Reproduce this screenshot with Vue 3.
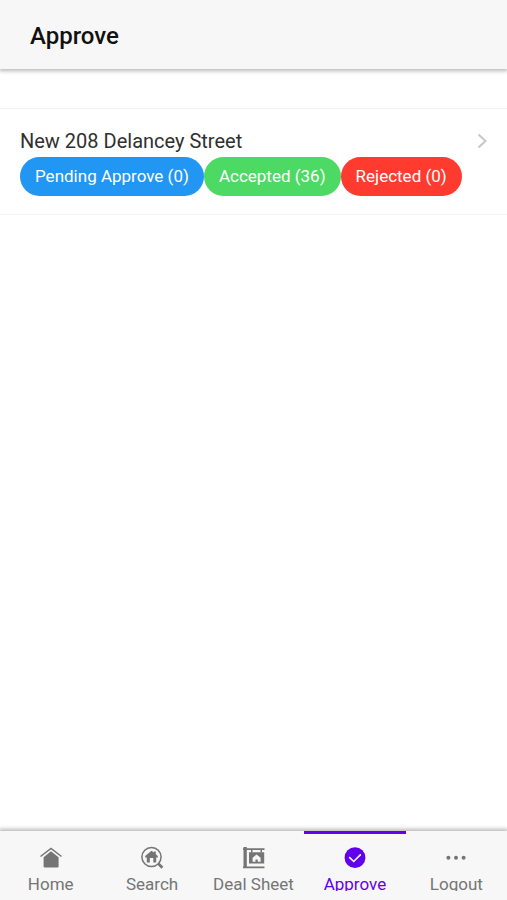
<template>
  <div class="page">
    <header class="navbar">
      <h1 class="navbar__title">Approve</h1>
    </header>

    <main class="content">
      <ul class="list">
        <li v-for="item in items" :key="item.id" class="list__item">
          <a href="#" class="list__link" @click.prevent>
            <span class="list__row">
              <span class="list__title">{{ item.title }}</span>
              <svg class="list__arrow" viewBox="0 0 10 16" aria-hidden="true">
                <path d="M1.5 1.5 L8.5 8 L1.5 14.5" />
              </svg>
            </span>
            <span class="chips">
              <span class="chip chip--pending">Pending Approve ({{ item.pending }})</span>
              <span class="chip chip--accepted">Accepted ({{ item.accepted }})</span>
              <span class="chip chip--rejected">Rejected ({{ item.rejected }})</span>
            </span>
          </a>
        </li>
      </ul>
    </main>

    <nav class="tabbar">
      <a
        v-for="tab in tabs"
        :key="tab.name"
        href="#"
        class="tab"
        :class="{ 'tab--active': tab.name === activeTab }"
        @click.prevent="activeTab = tab.name"
      >
        <svg v-if="tab.icon === 'home'" class="tab__icon" viewBox="0 0 24 24" aria-hidden="true">
          <path class="line" d="M1.5 10.5 L12 2.4 L22.5 10.5" />
          <path d="M12 5.2 L19.6 11.2 V20.2 Q19.6 21.5 18.3 21.5 H5.9 Q4.6 21.5 4.6 20.2 V11.2 Z" />
        </svg>
        <svg v-else-if="tab.icon === 'search'" class="tab__icon" viewBox="0 0 24 24" aria-hidden="true">
          <circle class="line" cx="11.5" cy="11" r="9.6" />
          <path class="handle" d="M18.4 17.8 L22.4 21.8" />
          <path d="M11.5 4.8 L13.8 6.6 V5.6 H15.8 V8.2 L17.8 10 V11.4 H16.2 V16.6 H13.3 V12 H9.8 V16.6 H6.8 V11.4 H5.2 V10 Z" />
        </svg>
        <svg v-else-if="tab.icon === 'sheet'" class="tab__icon" viewBox="0 0 24 24" aria-hidden="true">
          <path d="M1.5 1 H4.8 V22 H1.5 Z" />
          <path d="M1 2.3 H22.5 V4 H1 Z M1 20.6 H22.5 V22.2 H1 Z" />
          <path d="M9 3.5 H10.5 V6.5 H9 Z M18.5 3.5 H20 V6.5 H18.5 Z" />
          <path
            fill-rule="evenodd"
            d="M7 6.2 H22.2 V17.6 H7 Z M14.6 8.4 L10.6 11.8 V15.8 H13.5 V13.6 H15.7 V15.8 H18.6 V11.8 Z"
          />
        </svg>
        <svg v-else-if="tab.icon === 'check'" class="tab__icon" viewBox="0 0 24 24" aria-hidden="true">
          <circle cx="12" cy="11.7" r="10.4" />
          <path class="tick" d="M6.2 11.2 L10.7 15.5 L17.8 8.4" />
        </svg>
        <svg v-else class="tab__icon" viewBox="0 0 24 24" aria-hidden="true">
          <circle cx="4.4" cy="11.8" r="2" />
          <circle cx="12" cy="11.8" r="2" />
          <circle cx="19.6" cy="11.8" r="2" />
        </svg>
        <span class="tab__label">{{ tab.name }}</span>
      </a>
    </nav>
  </div>
</template>

<script setup>
import { ref } from 'vue'

const activeTab = ref('Approve')

const items = ref([
  { id: 1, title: 'New 208 Delancey Street', pending: 0, accepted: 36, rejected: 0 },
])

const tabs = [
  { name: 'Home', icon: 'home' },
  { name: 'Search', icon: 'search' },
  { name: 'Deal Sheet', icon: 'sheet' },
  { name: 'Approve', icon: 'check' },
  { name: 'Logout', icon: 'more' },
]
</script>

<style>
body {
  margin: 0;
  background: #fff;
}
</style>

<style scoped>
.page {
  display: flex;
  flex-direction: column;
  min-height: 100vh;
  font-family: Roboto, 'Noto Sans', sans-serif;
  color: #303030;
}
.navbar {
  display: flex;
  align-items: center;
  padding: 22px 30px 18px;
  background: #f7f7f7;
  box-shadow: 0 1px 4px 1px rgba(0, 0, 0, 0.28);
}
.navbar__title {
  margin: 0;
  font-size: 24px;
  line-height: 29px;
  font-weight: 500;
  color: #111;
}
.content {
  flex: 1;
  padding-top: 39px;
}
.list {
  margin: 0;
  padding: 0;
  list-style: none;
  border-top: 1px solid #f3f3f3;
}
.list__item {
  border-bottom: 1px solid #f3f3f3;
}
.list__link {
  display: block;
  padding: 18px 20px;
  color: inherit;
  text-decoration: none;
}
.list__row {
  display: flex;
  align-items: center;
  justify-content: space-between;
  margin-bottom: 2px;
}
.list__title {
  font-size: 20px;
  line-height: 28px;
}
.list__arrow {
  width: 10px;
  height: 16px;
  fill: none;
  stroke: #c7c7c7;
  stroke-width: 2;
}
.chips {
  display: flex;
}
.chip {
  padding: 0 15px;
  border-radius: 20px;
  font-size: 17px;
  line-height: 39px;
  white-space: nowrap;
  color: #fff;
}
.chip--pending {
  background: #2196f3;
}
.chip--accepted {
  background: #4cd964;
}
.chip--rejected {
  background: #ff3b30;
}
.tabbar {
  display: flex;
  background: #f7f7f7;
  box-shadow: 0 -1px 4px 1px rgba(0, 0, 0, 0.28);
}
.tab {
  flex: 1;
  display: flex;
  flex-direction: column;
  align-items: center;
  gap: 6px;
  padding: 12px 0 9px;
  border-top: 3px solid transparent;
  color: #757575;
  text-decoration: none;
}
.tab--active {
  color: #6200ee;
  border-top-color: #6200ee;
}
.tab__icon {
  width: 24px;
  height: 24px;
  fill: currentColor;
}
.line {
  fill: none;
  stroke: currentColor;
  stroke-width: 1.5;
}
.handle {
  stroke: currentColor;
  stroke-width: 2.8;
}
.tick {
  fill: none;
  stroke: #fff;
  stroke-width: 1.6;
}
.tab__label {
  height: 15px;
  overflow: hidden;
  font-size: 17px;
  line-height: 17px;
  white-space: nowrap;
}
</style>
